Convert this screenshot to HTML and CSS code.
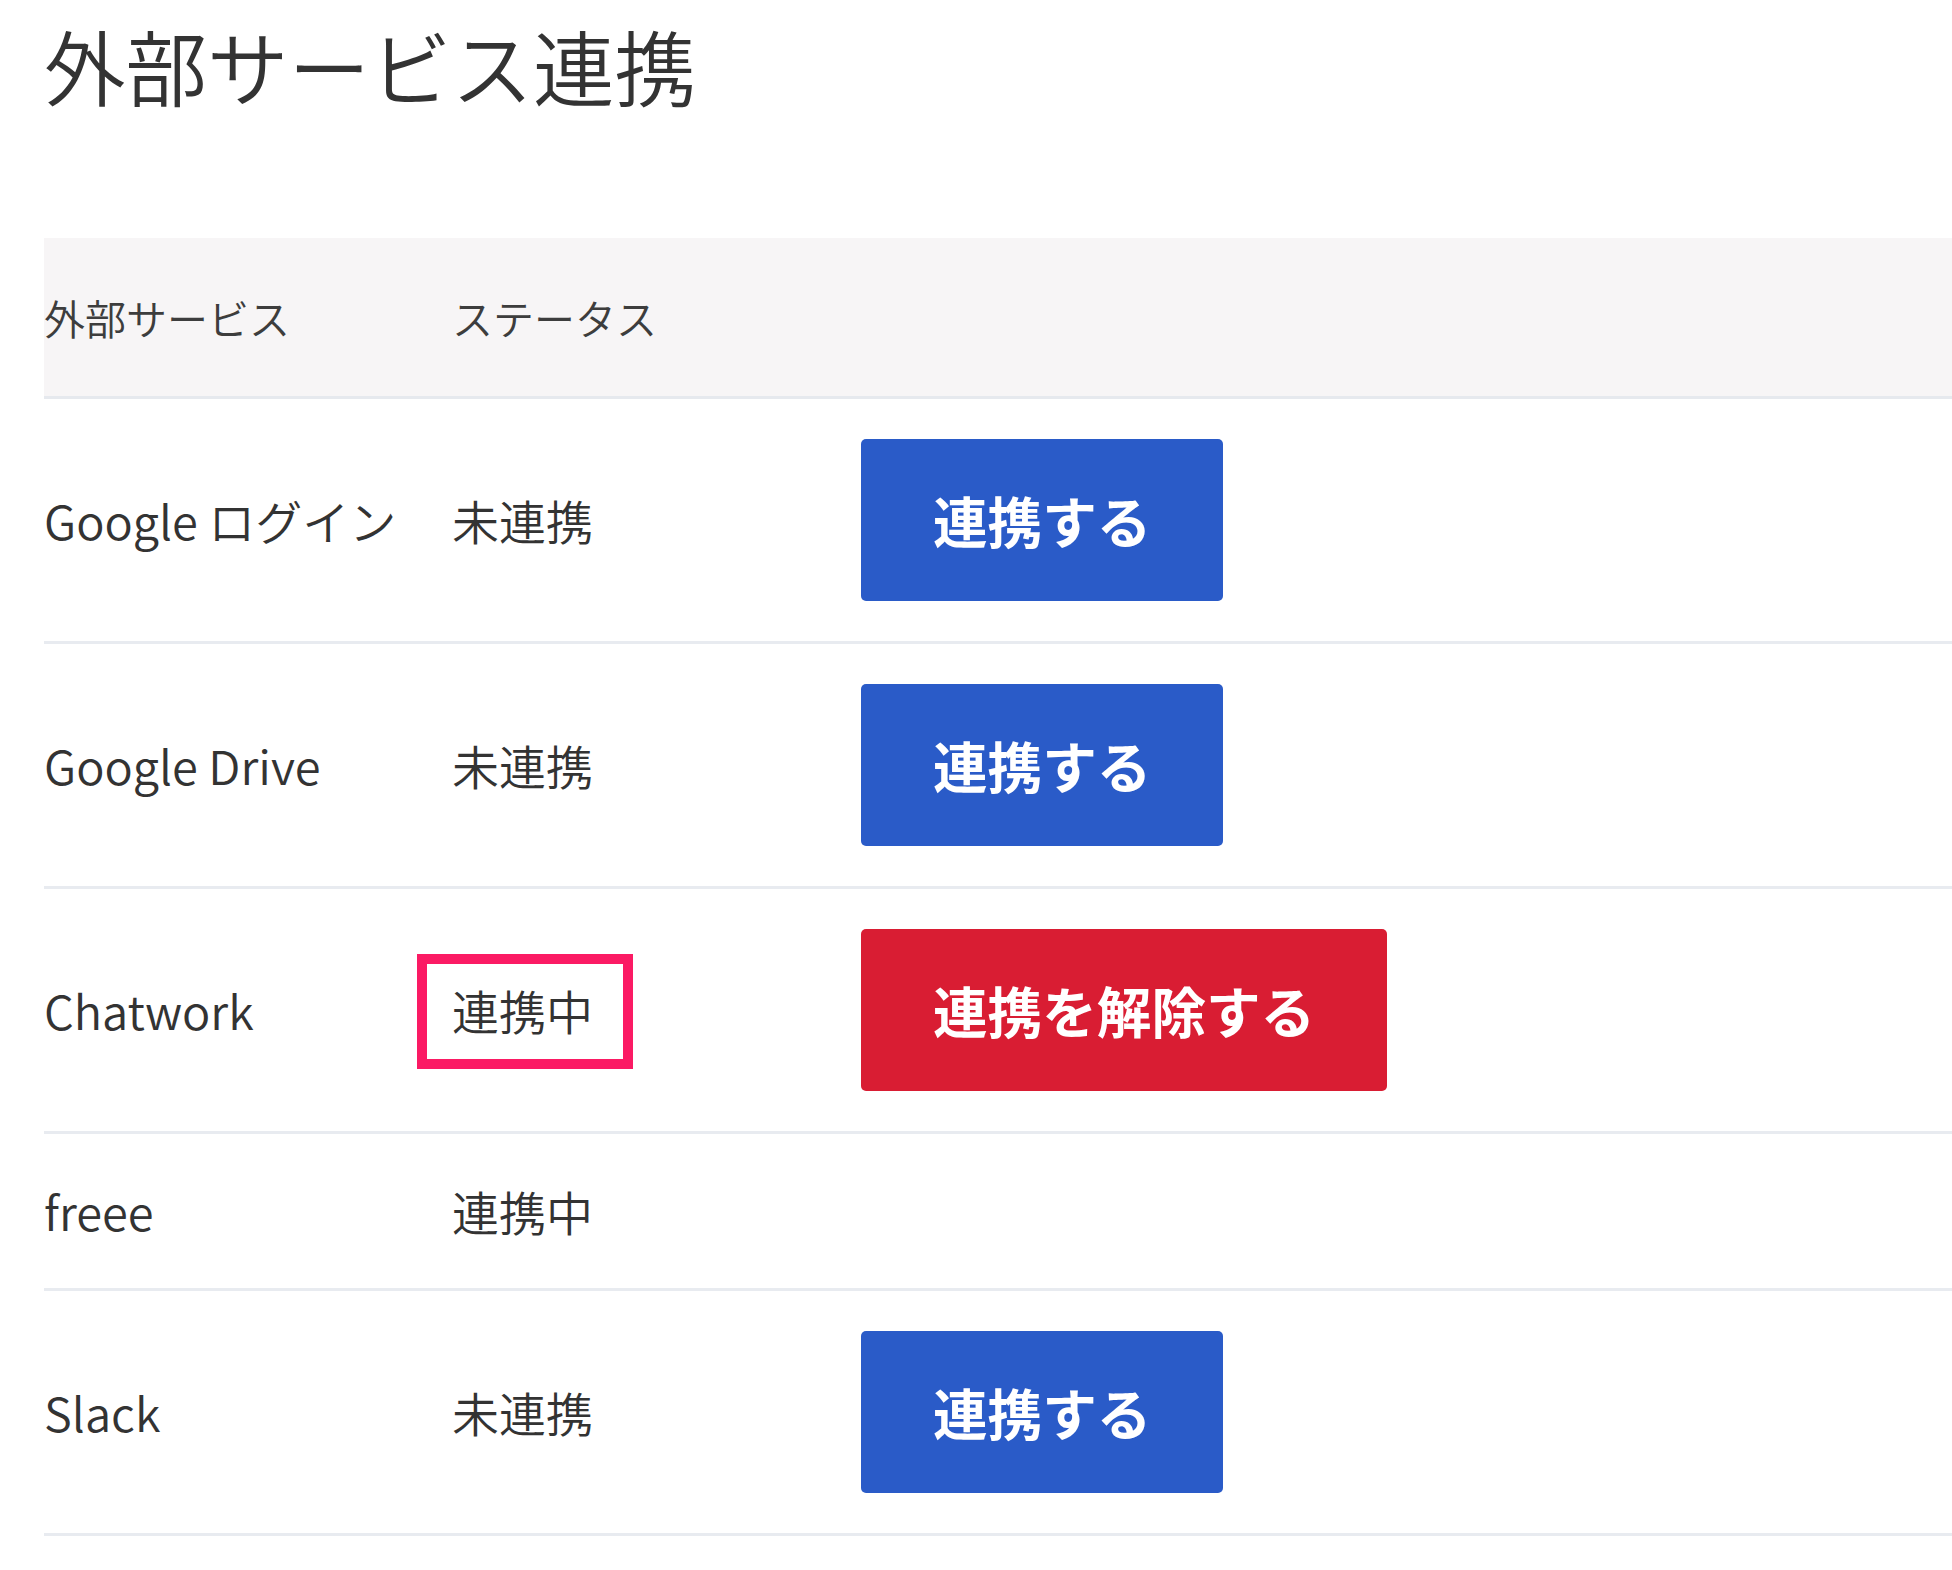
FILE: index.html
```html
<!DOCTYPE html>
<html lang="ja">
<head>
<meta charset="utf-8">
<title>外部サービス連携</title>
<link rel="stylesheet" href="styles.css">
</head>
<body>
<main class="page">
  <h1 class="title">外部サービス連携</h1>
  <table class="services">
    <colgroup>
      <col class="col-name">
      <col class="col-status">
      <col class="col-action">
    </colgroup>
    <thead>
      <tr>
        <th>外部サービス</th>
        <th>ステータス</th>
        <th></th>
      </tr>
    </thead>
    <tbody>
      <tr>
        <td>Google ログイン</td>
        <td>未連携</td>
        <td><button class="btn btn-connect" type="button">連携する</button></td>
      </tr>
      <tr>
        <td>Google Drive</td>
        <td>未連携</td>
        <td><button class="btn btn-connect" type="button">連携する</button></td>
      </tr>
      <tr>
        <td>Chatwork</td>
        <td><span class="status highlight">連携中</span></td>
        <td><button class="btn btn-disconnect" type="button">連携を解除する</button></td>
      </tr>
      <tr>
        <td>freee</td>
        <td>連携中</td>
        <td></td>
      </tr>
      <tr>
        <td>Slack</td>
        <td>未連携</td>
        <td><button class="btn btn-connect" type="button">連携する</button></td>
      </tr>
    </tbody>
  </table>
</main>
</body>
</html>
```

FILE: styles.css
```css
* {
  box-sizing: border-box;
}

html, body {
  margin: 0;
  padding: 0;
  background: #ffffff;
}

body {
  font-family: "Noto Sans CJK JP", "Noto Sans", sans-serif;
  color: #333333;
  overflow-x: hidden;
}

.page {
  padding: 16px 0 0 44px;
}

.title {
  margin: 0;
  font-size: 81.5px;
  font-weight: 350;
  line-height: 96px;
  color: #333333;
}

.services {
  margin-top: 126px;
  width: 100%;
  border-collapse: collapse;
  table-layout: fixed;
}

.col-name {
  width: 408px;
}

.col-status {
  width: 409px;
}

.services th {
  background: #f7f5f6;
  font-size: 41px;
  font-weight: 350;
  line-height: 64px;
  color: #3d3d3d;
  text-align: left;
  padding: 47px 0;
  border-bottom: 3px solid #e6e9ee;
}

.services td {
  font-size: 47px;
  font-weight: 350;
  line-height: 74px;
  color: #333333;
  padding: 40px 0;
  border-bottom: 3px solid #e8ebf0;
  vertical-align: middle;
  white-space: nowrap;
}

.status {
  display: inline-block;
}

.highlight {
  position: relative;
}

.highlight::after {
  content: "";
  position: absolute;
  top: -19px;
  left: -35px;
  right: -40px;
  bottom: -22px;
  border: 10px solid #fb1a64;
}

.btn {
  display: inline-block;
  font-family: "Noto Sans CJK JP", "Noto Sans", sans-serif;
  font-size: 54.6px;
  font-weight: 700;
  line-height: 82px;
  color: #ffffff;
  padding: 40px 72px;
  border: none;
  border-radius: 5px;
  vertical-align: middle;
}

.btn-connect {
  background: #2a5bc8;
}

.btn-disconnect {
  background: #d91d33;
}
```
